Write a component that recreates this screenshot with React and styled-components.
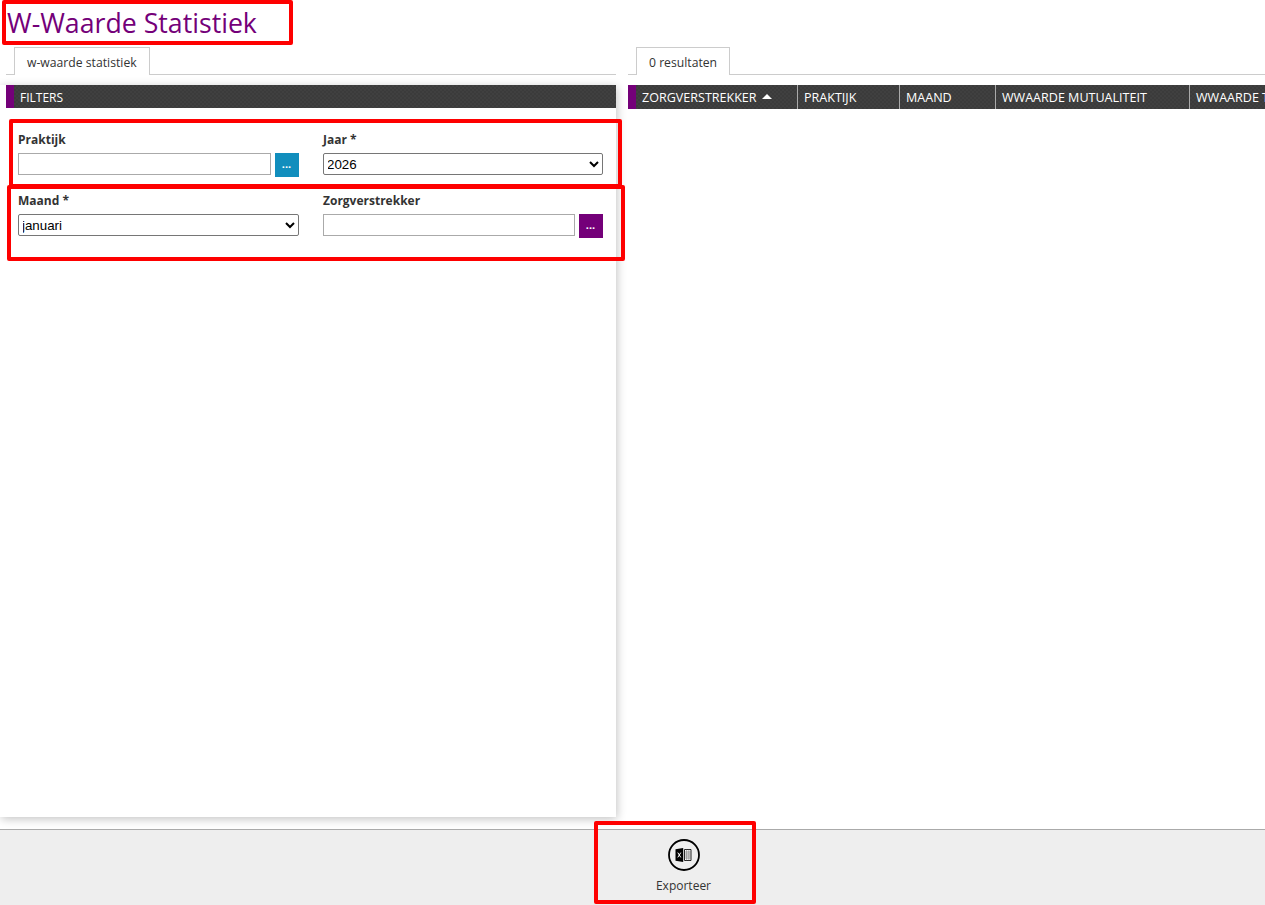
import React from 'react';
import styled, { createGlobalStyle } from 'styled-components';

const GlobalStyle = createGlobalStyle`
  html, body {
    margin: 0;
    padding: 0;
    height: 100%;
    background: #fff;
    overflow: hidden;
  }
  body {
    font-family: "Open Sans", "Noto Sans", sans-serif;
    color: #333;
  }
`;

const Page = styled.div`
  position: relative;
  width: 1265px;
  height: 905px;
  display: flex;
  flex-direction: column;
  overflow: hidden;
`;

const Title = styled.h1`
  margin: 0;
  height: 47px;
  padding: 4px 0 0 7px;
  box-sizing: border-box;
  font-size: 26.7px;
  line-height: 38px;
  font-weight: 400;
  color: #740079;
`;

const Columns = styled.div`
  flex: 1;
  display: flex;
  min-height: 0;
`;

const LeftColumn = styled.section`
  width: 616px;
  flex: none;
  display: flex;
  flex-direction: column;
`;

const FilterPanel = styled.div`
  height: 732px;
  margin-top: 10px;
  background: #fff;
  box-shadow: 1px 2px 9px rgba(0, 0, 0, 0.24);
`;

const RightColumn = styled.section`
  flex: 1;
  min-width: 0;
  margin-left: 12px;
  overflow: hidden;
`;

const TabStrip = styled.div`
  height: 28px;
  box-sizing: border-box;
  display: flex;
  border-bottom: 1px solid #ccc;
  padding-left: 8px;
  margin-left: ${(p) => p.$offset}px;
`;

const Tab = styled.div`
  height: 28px;
  box-sizing: border-box;
  padding: 0 12px;
  background: #fff;
  border: 1px solid #ccc;
  border-bottom: none;
  font-size: 12.2px;
  line-height: 29px;
  color: #333;
`;

const DarkBar = styled.div`
  height: ${(p) => p.$height}px;
  box-sizing: border-box;
  display: flex;
  align-items: center;
  background-color: #3d3d3d;
  background-image: repeating-conic-gradient(#404040 0% 25%, #3b3b3b 0% 50%);
  background-size: 4px 4px;
  border-left: 8px solid #740079;
  color: #fff;
  white-space: nowrap;
  margin-left: ${(p) => p.$offset}px;
`;

const GridHeader = styled(DarkBar)`
  margin-top: 10px;
`;

const FilterTitle = styled.span`
  padding: 1px 0 0 6px;
  font-size: 12px;
`;

const FilterGrid = styled.div`
  display: grid;
  grid-template-columns: 281px 280px;
  column-gap: 24px;
  row-gap: 15px;
  padding: 23px 0 0 18px;
`;

const Field = styled.div`
  display: flex;
  flex-direction: column;
`;

const Label = styled.label`
  font-size: 12px;
  line-height: 17px;
  font-weight: 700;
  color: #333;
  margin-bottom: 5px;
`;

const InputRow = styled.div`
  display: flex;
  gap: 4px;
  align-items: flex-start;
`;

const TextInput = styled.input`
  flex: 1;
  min-width: 0;
  height: 22px;
  box-sizing: border-box;
  border: 1px solid #aaa;
  background: #fff;
  padding: 0 4px;
  outline: none;
`;

const LookupButton = styled.button`
  width: 24px;
  height: 24px;
  flex: none;
  border: none;
  padding: 0 1px 2px 0;
  background: ${(p) => p.$color};
  color: #fff;
  font-family: "Open Sans", sans-serif;
  font-size: 11px;
  font-weight: 700;
  line-height: 22px;
`;

const Select = styled.select`
  width: 100%;
  height: 22px;
  box-sizing: border-box;
  border: 1px solid #767676;
  border-radius: 2px;
  background: #fff;
  color: #000;
  font-family: "Liberation Sans", Arial, sans-serif;
  font-size: 13.33px;
  text-indent: -1px;
  outline: none;
`;

const HeaderCell = styled.div`
  width: ${(p) => p.$width}px;
  flex: none;
  height: 100%;
  box-sizing: border-box;
  padding: 1px 0 0 6px;
  display: flex;
  align-items: center;
  gap: 5px;
  font-size: 12.55px;
  border-right: 1px solid #aaa;
  &:last-child {
    border-right: none;
  }
`;

const SortArrow = styled.span`
  width: 0;
  height: 0;
  border-left: 5px solid transparent;
  border-right: 5px solid transparent;
  border-bottom: 5px solid #fff;
  margin-bottom: 2px;
`;

const Footer = styled.footer`
  height: 76px;
  flex: none;
  box-sizing: border-box;
  border-top: 1px solid #aaa;
  background: #eee;
  display: flex;
  justify-content: center;
  padding-left: 102px;
`;

const ExportButton = styled.button`
  width: 100px;
  border: none;
  background: transparent;
  padding: 9px 0 0;
  display: flex;
  flex-direction: column;
  align-items: center;
  gap: 6px;
  font-family: "Open Sans", sans-serif;
  font-size: 12px;
  color: #333;
`;

const Highlight = styled.div`
  position: absolute;
  left: ${(p) => p.$x}px;
  top: ${(p) => p.$y}px;
  width: ${(p) => p.$w}px;
  height: ${(p) => p.$h}px;
  box-sizing: border-box;
  border: 4px solid #fe0000;
  border-radius: 2px;
  pointer-events: none;
`;

function ExcelIcon() {
  return (
    <svg width="32" height="32" viewBox="0 0 32 32" aria-hidden="true">
      <circle cx="16" cy="16" r="15" fill="none" stroke="#000" strokeWidth="1.8" />
      <path d="M7.5 10.2 L15.2 9 V23 L7.5 21.8 Z" fill="#000" />
      <path d="M16.5 10.5 H23 V21.5 H16.5 Z" fill="#fff" stroke="#222" strokeWidth="1" />
      <path d="M18.7 10.5 V21.5 M20.9 10.5 V21.5 M16.5 13 H23 M16.5 15 H23 M16.5 17 H23 M16.5 19 H23" stroke="#666" strokeWidth="0.6" fill="none" />
      <path d="M9.8 13.6 L12.8 18.4 M12.8 13.6 L9.8 18.4" stroke="#fff" strokeWidth="1" fill="none" />
    </svg>
  );
}

const columns = [
  { name: 'ZORGVERSTREKKER', width: 162, sorted: true },
  { name: 'PRAKTIJK', width: 102 },
  { name: 'MAAND', width: 96 },
  { name: 'WWAARDE MUTUALITEIT', width: 194 },
  { name: 'WWAARDE TOTAAL', width: 140 },
];

const months = ['januari', 'februari', 'maart', 'april', 'mei', 'juni', 'juli', 'augustus', 'september', 'oktober', 'november', 'december'];

export default function App() {
  return (
    <Page>
      <GlobalStyle />
      <Title>W-Waarde Statistiek</Title>
      <Columns>
        <LeftColumn>
          <TabStrip $offset={6}>
            <Tab>w-waarde statistiek</Tab>
          </TabStrip>
          <FilterPanel>
            <DarkBar $offset={6} $height={23}>
              <FilterTitle>FILTERS</FilterTitle>
            </DarkBar>
            <FilterGrid>
              <Field>
                <Label>Praktijk</Label>
                <InputRow>
                  <TextInput />
                  <LookupButton $color="#118ebd">...</LookupButton>
                </InputRow>
              </Field>
              <Field>
                <Label>Jaar *</Label>
                <Select defaultValue="2026">
                  <option>2026</option>
                  <option>2025</option>
                </Select>
              </Field>
              <Field>
                <Label>Maand *</Label>
                <Select defaultValue="januari">
                  {months.map((m) => (
                    <option key={m}>{m}</option>
                  ))}
                </Select>
              </Field>
              <Field>
                <Label>Zorgverstrekker</Label>
                <InputRow>
                  <TextInput />
                  <LookupButton $color="#740079">...</LookupButton>
                </InputRow>
              </Field>
            </FilterGrid>
          </FilterPanel>
        </LeftColumn>
        <RightColumn>
          <TabStrip $offset={0}>
            <Tab>0 resultaten</Tab>
          </TabStrip>
          <GridHeader $offset={0} $height={24}>
            {columns.map((c) => (
              <HeaderCell key={c.name} $width={c.width}>
                {c.name}
                {c.sorted && <SortArrow />}
              </HeaderCell>
            ))}
          </GridHeader>
        </RightColumn>
      </Columns>
      <Footer>
        <ExportButton>
          <ExcelIcon />
          Exporteer
        </ExportButton>
      </Footer>
      <Highlight $x={2} $y={0} $w={291} $h={45} />
      <Highlight $x={9} $y={119} $w={613} $h={69} />
      <Highlight $x={7} $y={185} $w={618} $h={76} />
      <Highlight $x={594} $y={821} $w={162} $h={83} />
    </Page>
  );
}
